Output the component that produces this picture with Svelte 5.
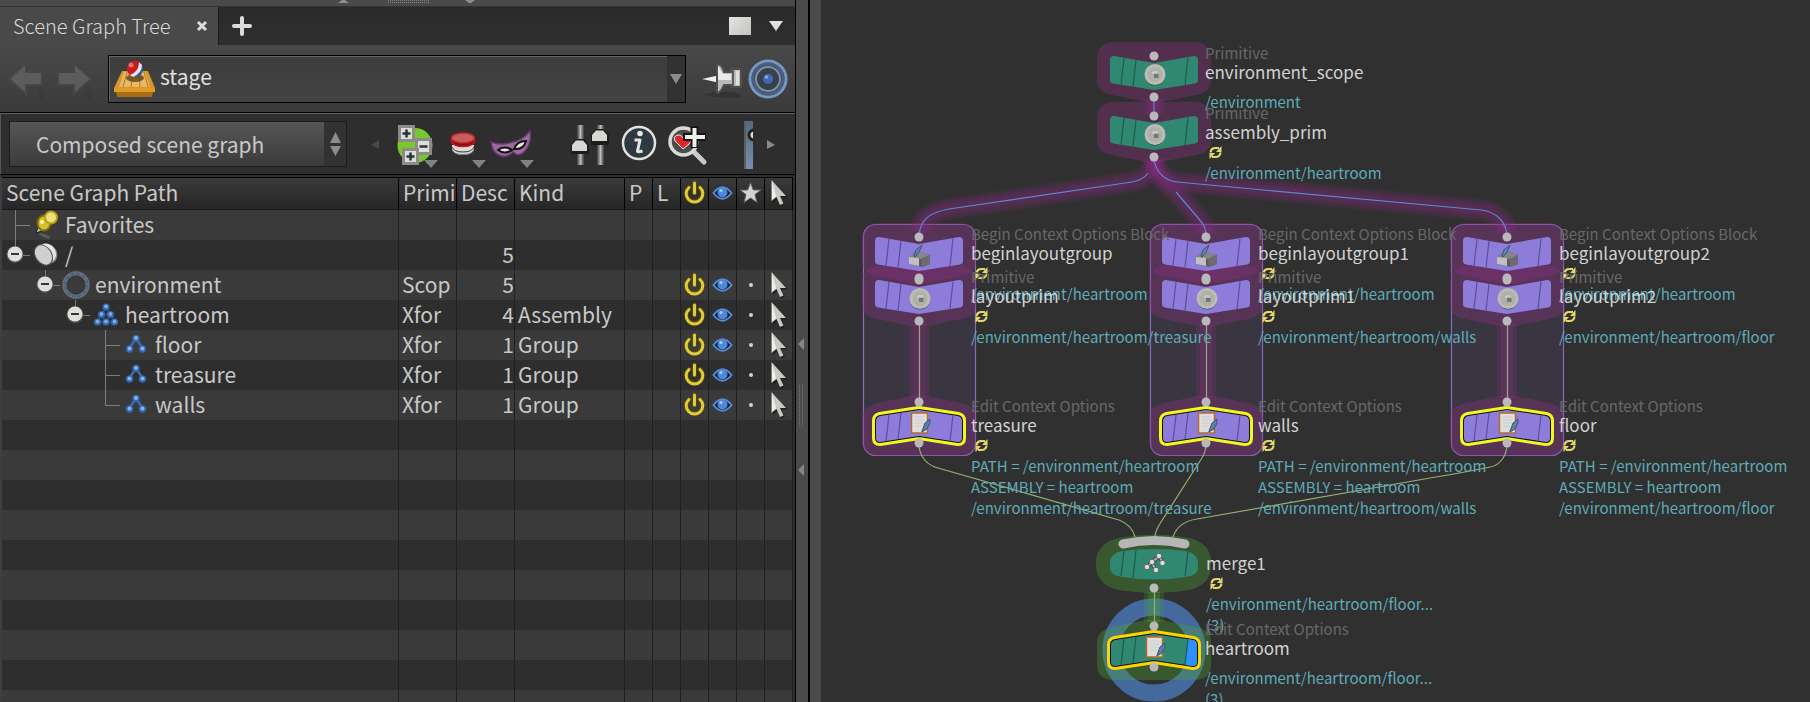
<script>
  const columns = ['Primi', 'Desc', 'Kind', 'P', 'L'];
  const rows = [
    { name: 'Favorites', depth: 0, icon: 'favorites', line: 'through' },
    { name: '/', depth: 0, icon: 'root', toggle: true, line: 'up', desc: 5 },
    { name: 'environment', depth: 1, icon: 'scope', toggle: true, line: 'up', type: 'Scop', desc: 5, flags: true },
    { name: 'heartroom', depth: 2, icon: 'assembly', toggle: true, line: 'up', type: 'Xfor', desc: 4, kind: 'Assembly', flags: true },
    { name: 'floor', depth: 3, icon: 'xform', line: 'through', type: 'Xfor', desc: 1, kind: 'Group', flags: true },
    { name: 'treasure', depth: 3, icon: 'xform', line: 'through', type: 'Xfor', desc: 1, kind: 'Group', flags: true },
    { name: 'walls', depth: 3, icon: 'xform', line: 'up', type: 'Xfor', desc: 1, kind: 'Group', flags: true }
  ];
  const blanks = Array.from({ length: 10 }, (_, i) => i);

  const blocks = [
    { x: 98, suffix: '', name: 'treasure' },
    { x: 385, suffix: '1', name: 'walls' },
    { x: 686, suffix: '2', name: 'floor' }
  ];
  const nodes = [
    { x: 333, y: 73, shape: 'down', tone: 'green', halo: 'purple', icon: 'disc' },
    { x: 333, y: 133, shape: 'down', tone: 'green', halo: 'purple', icon: 'disc' },
    ...blocks.flatMap((b) => [
      { x: b.x, y: 254, shape: 'down', tone: 'violet', halo: 'purple', icon: 'block' },
      { x: b.x, y: 297, shape: 'down', tone: 'violet', halo: 'purple', icon: 'disc' },
      { x: b.x, y: 426, shape: 'up', tone: 'violet', halo: 'purple', icon: 'clip', ring: '#f3f81c' }
    ]),
    { x: 333, y: 564, shape: 'merge', tone: 'green', halo: 'green', icon: 'merge' },
    { x: 333, y: 650, shape: 'up', tone: 'green', halo: 'green', icon: 'clip', ring: '#ffd500', display: true }
  ];
  const labels = [
    { x: 384, y: 44, type: 'Primitive', name: 'environment_scope', lines: ['/environment'] },
    { x: 384, y: 104, type: 'Primitive', name: 'assembly_prim', badge: true, lines: ['/environment/heartroom'] },
    ...blocks.flatMap((b) => [
      { x: b.x + 52, y: 225, type: 'Begin Context Options Block', name: 'beginlayoutgroup' + b.suffix, badge: true, lines: ['/environment/heartroom'] },
      { x: b.x + 52, y: 268, type: 'Primitive', name: 'layoutprim' + b.suffix, badge: true, lines: ['/environment/heartroom/' + b.name] },
      { x: b.x + 52, y: 397, type: 'Edit Context Options', name: b.name, badge: true, lines: ['PATH = /environment/heartroom', 'ASSEMBLY = heartroom', '/environment/heartroom/' + b.name] }
    ]),
    { x: 385, y: 535, type: '', name: 'merge1', badge: true, lines: ['/environment/heartroom/floor...', '(3)'] },
    { x: 384, y: 620, type: 'Edit Context Options', name: 'heartroom', lines: ['/environment/heartroom/floor...', '(3)'] }
  ];
  const glowWires = [
    'M333 160C331 173 323 180 311 182L128 209C106 213 100 221 98 232',
    'M333 160C336 176 344 184 355 192L378 219C384 226 385 230 385 234',
    'M333 160C335 172 344 181 356 182L660 210C676 212 685 222 686 234',
    'M333 99V114'
  ];
  const blueWires = [
    'M327 173C323 179 317 181 311 182L128 209C106 213 100 221 98 234',
    'M355 192L378 219C384 226 385 230 385 236',
    'M333 160C335 172 344 181 356 182L660 210C676 212 685 222 686 236',
    'M333 99V116'
  ];
  const greenWires = [
    'M98 447C100 458 106 465 117 468L298 520C306 523 312 529 314 537',
    'M385 447C384 452 382 457 379 461L340 522C336 528 334 532 334 537',
    'M686 447C684 459 677 467 664 468Q640 473 609 478L376 519C362 521 355 528 352 537'
  ];
  const haloDown = 'M-40-31H40Q57-31 57-14V8Q57 19 42 22L8 29H-8L-42 22Q-57 19-57 8V-14Q-57-31-40-31Z';
  const haloUp = 'M-40 30H40Q57 30 57 14V-8Q57-19 42-23L8-30H-8L-42-23Q-57-19-57-8V14Q-57 30-40 30Z';
  const bodyDown = 'M-40-17L0-10L40-17Q44-17 44-13V7Q44 10 41 10.500L0 17L-41 10.500Q-44 10-44 7V-13Q-44-17-40-17Z';
  const bodyUp = 'M-39-10L0-16L39-10Q43-9 43-5V12Q43 16 39 16L0 10L-39 16Q-43 16-43 12V-5Q-43-9-39-10Z';
  const bodyMerge = 'M-32-13Q0-17 32-13Q44-10 44-2V4Q44 11 32 13Q0 18-32 13Q-44 11-44 4V-2Q-44-10-32-13Z';
  const haloMerge = 'M-36-26Q0-33 36-26Q57-20 57-2V2Q57 20 36 26Q0 32-36 26Q-58 20-58 2V-2Q-58-20-36-26Z';
  const bodies = { down: bodyDown, up: bodyUp, merge: bodyMerge };
  const halos = { down: haloDown, up: haloUp, merge: haloMerge };
</script>

{#snippet powerIcon()}
  <svg class="flag" viewBox="0 0 28 30" aria-hidden="true">
    <g fill="none" stroke-linecap="round">
      <path d="M8 9.500A8 8 0 1 0 19 9.500M13.500 5V15" stroke="#5c5000" stroke-width="5" opacity=".7" />
      <path d="M8 9.500A8.300 8.300 0 1 0 19 9.500" stroke="#e0cb3c" stroke-width="3" />
      <path d="M13.500 5V15" stroke="#e0cb3c" stroke-width="3" />
    </g>
  </svg>
{/snippet}

{#snippet eyeIcon()}
  <svg class="flag" viewBox="0 0 28 30" aria-hidden="true">
    <path d="M4.500 15Q13.500 3.500 22.500 15Q13.500 26.500 4.500 15Z" fill="#101a26" stroke="#568cd4" stroke-width="2" />
    <circle cx="13.500" cy="14.500" r="5" fill="#4c89dc" />
    <circle cx="12" cy="12.500" r="1.600" fill="#a9ccf7" />
  </svg>
{/snippet}

{#snippet cursorIcon()}
  <svg class="flag" viewBox="0 0 28 30" aria-hidden="true">
    <path d="M8 3.500V25L12.500 21L16 28.500L20 27L16.500 19.500H23Z" fill="#181818" opacity=".7" />
    <path d="M6.500 2V23L11.500 19L15 27L18.500 25.500L15 18H21Z" fill="#c9c9c4" />
    <path d="M7 3V21.500L11 18Z" fill="#eee" />
  </svg>
{/snippet}

{#snippet treeIcon(kind)}
  <svg class="node-icon" viewBox="0 0 30 30" aria-hidden="true">
    {#if kind === 'favorites'}
      <path d="M11 23L20 26L19 29Q12 27 8 24Z" fill="#5a5a5a" />
      <path d="M6 23L9 15L14 20Z" fill="#c8c8c8" stroke="#1d1d1d" />
      <ellipse cx="14" cy="13" rx="6.500" ry="7.500" fill="#d3c02c" stroke="#7e6c08" stroke-width="2" />
      <circle cx="21" cy="7.500" r="6" fill="#eee27a" stroke="#b79f16" stroke-width="2" />
      <circle cx="12" cy="12" r="2" fill="#fff6b8" />
    {:else if kind === 'root'}
      <ellipse cx="18" cy="14" rx="9" ry="10" transform="rotate(-35 18 14)" fill="#8c8c8c" />
      <ellipse cx="17" cy="13" rx="8.500" ry="10" transform="rotate(-35 17 13)" fill="#e6e6e6" />
      <ellipse cx="13.500" cy="15" rx="8" ry="11" transform="rotate(-35 13.500 15)" fill="#cfcfcd" stroke="#555" />
    {:else if kind === 'scope'}
      <circle cx="16" cy="15" r="11.700" fill="none" stroke="#6e6e6e" stroke-width="4" />
      <circle cx="16" cy="15" r="11.500" fill="none" stroke="#2e62a8" stroke-width="1.600" stroke-dasharray="4 2" />
    {:else if kind === 'assembly'}
      <path d="M16 7L7 22M16 7L25 22M11 14H21M7 22H25M11 14L16 22L21 14" stroke="#26466f" stroke-width="2.500" fill="none" />
      {#each [[16, 7], [11.5, 14.5], [20.5, 14.5], [7.500, 22], [16, 22], [24.500, 22]] as p}
        <circle cx={p[0]} cy={p[1]} r="3.600" fill="#3468b2" />
        <circle cx={p[0]} cy={p[1] - 0.5} r="1.900" fill="#82a9dc" />
      {/each}
    {:else}
      <path d="M9 19L16 8L23 19" stroke="#356bb6" stroke-width="2.500" fill="none" />
      {#each [[16, 8.500], [9.500, 19], [22.500, 19]] as p}
        <circle cx={p[0]} cy={p[1]} r="3.700" fill="#3468b2" />
        <circle cx={p[0]} cy={p[1] - 0.5} r="1.900" fill="#8db4e6" />
      {/each}
    {/if}
  </svg>
{/snippet}

{#snippet dropMark()}
  <path d="M34 39H48L41 47Z" fill="#828282" />
{/snippet}

<svelte:head><title>Scene Graph Tree</title></svelte:head>

<main class="app">
  <section class="pane">
    <div class="strip">
      <svg viewBox="0 0 150 6" aria-hidden="true">
        <path d="M4 3H15L11 0H8Z M131 0H141L137 3H135Z" fill="#8d8d8d" />
        <path d="M54 .500H95M54 2.500H95" stroke="#7e7e7e" stroke-dasharray="1 1" />
      </svg>
    </div>

    <header class="tabs">
      <div class="tab">
        <span>Scene Graph Tree</span>
        <button aria-label="Close tab">
          <svg width="12" height="12" viewBox="0 0 12 12"><path d="M2 2L10 10M10 2L2 10" stroke="#dcdcda" stroke-width="3" /></svg>
        </button>
      </div>
      <button class="add" aria-label="New tab">
        <svg width="20" height="20" viewBox="0 0 20 20"><path d="M2 10H18M10 2V18" stroke="#dcdcda" stroke-width="4" stroke-linecap="round" /></svg>
      </button>
      <button class="max" aria-label="Maximize pane"><span></span></button>
      <button aria-label="Pane menu">
        <svg width="14" height="12" viewBox="0 0 14 12"><path d="M0 1H14L7 11Z" fill="#e0e0de" /></svg>
      </button>
    </header>

    <nav class="pathbar">
      <button aria-label="Back">
        <svg width="48" height="48" viewBox="0 0 48 48">
          <path d="M9 24L26 8V17H42V30H26V39Z" fill="#5c5c5c" stroke="#464646" stroke-width="2" />
          <path d="M39 34L46 40L39 46Z" fill="#3a3a3a" />
        </svg>
      </button>
      <button aria-label="Forward">
        <svg width="48" height="48" viewBox="0 0 48 48">
          <path d="M43 24L26 8V17H10V30H26V39Z" fill="#5c5c5c" stroke="#464646" stroke-width="2" />
          <path d="M39 34L46 40L39 46Z" fill="#3a3a3a" />
        </svg>
      </button>
      <div class="field">
        <svg width="44" height="38" viewBox="0 0 44 38" aria-hidden="true">
          <path d="M9 11H35L42 28H1Z" fill="#d9942c" />
          <path d="M11 12H32L37 27H6Z" fill="#e5b96a" />
          <path d="M14 12L10 27M20 12L18 27M26 12L27 27M31 12L35 27" stroke="#b97818" />
          <path d="M1 28H42V32H1Z" fill="#e09a28" />
          <path d="M3 32H40L39 37H4Z" fill="#a86d12" />
          <ellipse cx="22" cy="18" rx="9" ry="4" fill="#4a3210" opacity=".7" />
          <circle cx="22" cy="9" r="8" fill="#c61c24" />
          <path d="M29 5A8 8 0 0 1 22 17L19 16Q28 12 28 3Z" fill="#2e5da8" />
          <path d="M17 15Q26 12 26 2L29 5Q29 13 20 17Z" fill="#ece8e4" />
          <circle cx="18" cy="5" r="2.500" fill="#ee6a68" />
        </svg>
        <input aria-label="Path" value="stage" />
        <button aria-label="Path history">
          <svg width="12" height="12" viewBox="0 0 12 12"><path d="M0 1H12L6 11Z" fill="#8c8c8c" /></svg>
        </button>
      </div>
      <button class="pin" aria-label="Pin pane">
        <svg width="44" height="44" viewBox="0 0 44 44">
          <path d="M4 38Q20 32 40 37V40Q20 42 4 38Z" fill="#333" />
          <path d="M2 22L18 18.500V25.500Z" fill="#f2f2f0" />
          <path d="M17 7C21 7 23 11 24 15H31V12H41V30H31V28H24C22 32 21 36 17 36Z" fill="#b9b9b6" stroke="#4e4e4e" stroke-width="2" />
          <path d="M18 9C20 11 21 16 24 17H31V23H18Z" fill="#eaeae8" />
          <path d="M33 13V29" stroke="#5d5d5d" stroke-width="2" />
          <path d="M37.500 14V28" stroke="#dededc" stroke-width="3" />
        </svg>
      </button>
      <button aria-label="Link group">
        <svg width="42" height="42" viewBox="0 0 42 42">
          <circle cx="21" cy="21" r="18" fill="#3d4450" stroke="#7897c6" stroke-width="3" />
          <circle cx="21" cy="21" r="15" fill="none" stroke="#4d5d78" stroke-width="3" />
          <circle cx="21" cy="21" r="12" fill="#3c3f44" stroke="#7391bd" stroke-width="2" />
          <circle cx="21" cy="21" r="5" fill="#3a6cbc" />
          <circle cx="19.500" cy="19" r="1.700" fill="#86aee6" />
        </svg>
      </button>
    </nav>

    <div class="toolbar">
      <div class="combo">
        <select aria-label="Scene graph view"><option>Composed scene graph</option></select>
        <svg width="22" height="44" viewBox="0 0 22 44" aria-hidden="true"><path d="M6 21H17L11.500 10ZM6 24H17L11.500 34Z" fill="#8c8c8c" /></svg>
      </div>
      <button class="scroll left" aria-label="Scroll left"><svg width="8" height="10" viewBox="0 0 8 10"><path d="M8 0V9L0 5Z" fill="#484848" /></svg></button>
      <button aria-label="Expand and collapse">
        <svg width="48" height="48" viewBox="0 0 48 48">
          <circle cx="25" cy="24.500" r="17.500" fill="#78c82c" />
          {#each [[8, 4, true], [25, 17, false], [12, 27, true]] as s}
            <rect x={s[0]} y={s[1]} width="17" height="17" fill="#8b8b89" />
            <rect x={s[0] + 3} y={s[1] + 3} width="11" height="11" fill="#deded9" />
            <path d={s[2] ? `M${s[0] + 4.5} ${s[1] + 8.5}h8M${s[0] + 8.5} ${s[1] + 4.5}v8` : `M${s[0] + 4.5} ${s[1] + 8.5}h8`} stroke="#273338" stroke-width="2.500" />
          {/each}
          {@render dropMark()}
        </svg>
      </button>
      <button aria-label="Payloads">
        <svg width="48" height="48" viewBox="0 0 48 48">
          <path d="M14 24V28Q16 34 25 34T36 28V24Z" fill="#dadad6" />
          <path d="M14 26Q16 31 25 31T36 26" fill="none" stroke="#3a3a3a" />
          <path d="M14 29Q16 33.500 25 33.500T36 29" fill="none" stroke="#7c7c7a" />
          <path d="M13.500 17V20Q15 25.500 25 25.500T36.500 20V17Z" fill="#7e1015" stroke="#c01b22" stroke-width="1.500" />
          <ellipse cx="25" cy="17" rx="11.500" ry="5" fill="#c45f60" stroke="#cc1f27" stroke-width="1.500" />
          {@render dropMark()}
        </svg>
      </button>
      <button aria-label="Masks">
        <svg width="48" height="48" viewBox="0 0 48 48">
          <path d="M5 21Q16 25 26 21Q36 20 44 10Q46 22 39 30Q33 37 27 31Q20 38 13 34Q6 31 5 21Z" fill="#9a6a9c" stroke="#67376f" stroke-width="1.500" />
          <path d="M12 29Q18 24 26 29Q19 34 12 29ZM28 28Q31 20 40 20Q38 29 28 28Z" fill="#e9e6e8" stroke="#101010" stroke-width="2" />
          {@render dropMark()}
        </svg>
      </button>
      <button class="spaced" aria-label="Settings">
        <svg width="48" height="48" viewBox="0 0 48 48">
          <path d="M14.500 4V44M34.500 4V44" stroke="#6f6f6d" stroke-width="6" />
          <path d="M14.500 4V44M34.500 4V44" stroke="#bcbcba" stroke-width="2" />
          <path d="M5 33V24L10 18H19L23 24V33ZM25 24V14L30 8H37L43 14V24Z" fill="#1c1c1c" />
          <path d="M6 30V24L10 19.500H17L21 24V30ZM26 20V14L30 9.500H37L41 14V20Z" fill="#d6d6d2" />
        </svg>
      </button>
      <button aria-label="Scene graph details">
        <svg width="48" height="48" viewBox="0 0 48 48">
          <circle cx="25" cy="22" r="16" fill="#2f3a40" stroke="#e2e2df" stroke-width="2.500" />
          <circle cx="26" cy="12.500" r="2.800" fill="#e6e6e3" />
          <path d="M20.500 19H26L23.500 30Q23.500 31.500 28.500 30" fill="none" stroke="#e6e6e3" stroke-width="3" stroke-linejoin="round" />
        </svg>
      </button>
      <button aria-label="Find primitives">
        <svg width="48" height="48" viewBox="0 0 48 48">
          <path d="M30 29L42 41" stroke="#c9c9c5" stroke-width="5" stroke-linecap="round" />
          <circle cx="21.500" cy="20.500" r="13.500" fill="#484d4d" stroke="#d9d9d5" stroke-width="3.500" />
          <path d="M21 28L13 20Q11 15 16 14Q19 13 21 17Q24 13 27 15Q31 19 27 23Z" fill="#e02428" stroke="#f1eeee" />
          <path d="M21 16H44M32.500 5V27" stroke="#161616" stroke-width="8" />
          <path d="M23 16H43M32.500 7V26" stroke="#f0f0ee" stroke-width="4" />
        </svg>
      </button>
      <span class="cut"></span>
      <button class="scroll right" aria-label="Scroll right"><svg width="8" height="10" viewBox="0 0 8 10"><path d="M0 0V9L8 5Z" fill="#8a8a8a" /></svg></button>
    </div>

    <div class="tree-wrap">
      <table>
        <colgroup>
          <col /><col class="c-mid" /><col class="c-mid" /><col class="c-kind" />
          {#each Array(6) as _}<col class="c-flag" />{/each}
        </colgroup>
        <thead>
          <tr>
            <th class="path">Scene Graph Path</th>
            {#each columns as c}<th>{c}</th>{/each}
            <th class="icon" aria-label="Activate">{@render powerIcon()}</th>
            <th class="icon" aria-label="Visible">{@render eyeIcon()}</th>
            <th class="icon" aria-label="Solo">
              <svg class="flag" viewBox="0 0 28 30"><path d="M13.500 4.500L16.300 12H24L18 16.500L20 24.500L13.500 20L7 24.500L9 16.500L3 12H10.700Z" fill="#d2d4d2" stroke="#566064" stroke-width="1" /></svg>
            </th>
            <th class="icon" aria-label="Selectable">{@render cursorIcon()}</th>
          </tr>
        </thead>
        <tbody>
          {#each rows as r}
            <tr>
              <td class="path">
                <div class="tree" style:padding-left="{r.depth * 30}px">
                  <svg class="branch" viewBox="0 0 30 30" aria-hidden="true">
                    <path d={r.line === 'through' ? 'M15.500 0V30M15.500 15.500H31' : 'M15.500 0V15.500H31'} fill="none" stroke="#7d7d7d" />
                    {#if r.toggle}
                      <circle cx="15" cy="14.500" r="8.500" fill="#55554f" />
                      <circle cx="15" cy="14" r="7.500" fill="#dfdfdb" />
                      <path d="M11 14H19" stroke="#2c3a40" stroke-width="2" />
                    {/if}
                  </svg>
                  {@render treeIcon(r.icon)}
                  <span>{r.name}</span>
                </div>
              </td>
              <td>{r.type ?? ''}</td>
              <td class="num">{r.desc ?? ''}</td>
              <td>{r.kind ?? ''}</td>
              <td></td>
              <td></td>
              {#if r.flags}
                <td class="icon">{@render powerIcon()}</td>
                <td class="icon">{@render eyeIcon()}</td>
                <td class="icon solo"><span class="dot"></span></td>
                <td class="icon">{@render cursorIcon()}</td>
              {:else}
                <td></td><td></td><td></td><td></td>
              {/if}
            </tr>
          {/each}
          {#each blanks as b (b)}
            <tr>{#each Array(10) as _}<td></td>{/each}</tr>
          {/each}
        </tbody>
      </table>
    </div>
  </section>

  <div class="splitter" role="separator">
    <svg width="12" height="142" viewBox="0 0 12 142" aria-hidden="true">
      <path d="M9 0V12L3 6ZM9 126V138L3 132Z" fill="#858585" />
      <path d="M4.500 47V89M7.500 47V89" stroke="#7a7a7a" stroke-dasharray="1 1" />
    </svg>
  </div>

  <section class="network" aria-label="Network editor">
    <svg class="wires" aria-hidden="true">
      {#each blocks as b}
        <rect x={b.x - 55.5} y="224.500" width="112" height="231" rx="12" fill="#3a3641" stroke="#8769bd" stroke-width="1.200" />
      {/each}
      <circle cx="333" cy="650" r="43" fill="none" stroke="#44699d" stroke-width="17" />
      {#each glowWires as d}
        <g fill="none" stroke="#8e2e85">
          <path {d} stroke-width="22" opacity=".14" />
          <path {d} stroke-width="17" opacity=".14" />
          <path {d} stroke-width="10" opacity=".2" />
        </g>
      {/each}
      {#each blocks as b}
        <g stroke="#8e2e85">
          <path d="M{b.x} 324V398" stroke-width="20" opacity=".2" />
          <path d="M{b.x} 324V398" stroke-width="12" opacity=".25" />
        </g>
      {/each}
      <path d="M333 592V622" stroke="#4eaa30" stroke-width="20" opacity=".2" />
      <path d="M333 592V622" stroke="#4eaa30" stroke-width="12" opacity=".25" />
      {#each nodes as n}
        <path d={halos[n.shape]} transform="translate({n.x} {n.y})" class={'halo-' + n.halo} />
      {/each}
      <g fill="none" stroke="#5f87d2" stroke-width="1.200">
        {#each blueWires as d}<path {d} />{/each}
      </g>
      <g fill="none" stroke="#93b074" stroke-width="1.200">
        {#each greenWires as d}<path {d} />{/each}
        {#each blocks as b}<path d="M{b.x + 0.5} 320V402" />{/each}
        <path d="M333.500 588V626" />
      </g>
      {#each nodes as n}
        <g transform="translate({n.x} {n.y})">
          {#if n.ring}
            <path d={bodyUp} fill={n.ring} stroke={n.ring} stroke-width="8" stroke-linejoin="round" />
            <path d={bodyUp} stroke="#101010" stroke-width="2" />
          {/if}
          <path d={bodies[n.shape]} class={'body-' + n.tone} />
          {#if n.display}<path d="M34-11L39-10Q43-9 43-5V12Q43 16 39 16L31 15Z" fill="#2e8fff" />{/if}
          <path
            d={n.shape === 'down' ? 'M-30-15L-33 11.500M-18-13L-21 13.500M34-15.500L31 12' : n.shape === 'up' ? 'M-30-11L-33 15M-18-13L-21 13M34-11L31 15' : 'M-30-13L-33 12M-18-14L-21 14.500M34-13L31 12.500'}
            class={'cut-' + n.tone}
          />
          {#if n.shape === 'merge'}
            <path d="M-31-20Q0-27 31-20" fill="none" stroke="#b6b6b6" stroke-width="9" stroke-linecap="round" />
            <circle cy="24" r="4.500" fill="#b9b9b9" />
          {:else}
            <circle cy={n.shape === 'down' ? -17 : -24} r="4.500" fill="#b9b9b9" />
            <circle cy={n.shape === 'down' ? 24 : 17} r="4.500" fill="#b9b9b9" />
          {/if}
          {#if n.icon === 'disc'}
            <ellipse cx="1" cy="3" rx="10" ry="9.500" fill="#3e4843" />
            <circle cx="1" cy="1.500" r="10.500" fill="#bcbcb4" />
            <circle cx="1" cy="1.500" r="7.500" fill="#b0b0a8" />
            <rect x="0" y="1" width="4.500" height="4" fill="#6c7b72" />
            <path d="M-1 1V-1H4" fill="none" stroke="#dedfd8" />
          {:else if n.icon === 'block'}
            <path d="M-10 3L-2-3L11 1V10L3 13L-10 10Z" fill="#5c5c5e" />
            <path d="M-10 3L-2-3L11 1L2 5Z" fill="#85858a" />
            <path d="M-10 3L0 4V12L-10 10Z" fill="#c0c0c0" />
            <path d="M2 5L11 1V10L3 13Z" fill="#6c6c70" />
            <path d="M-5 2L-3-4L3-9L0-2L-4 3Z" fill="#5d88b8" stroke="#335477" />
          {:else if n.icon === 'clip'}
            <rect x="-7.500" y="-13" width="16" height="20" fill="#e0dedb" stroke="#b06c2f" stroke-width="1.500" />
            <path d="M-4-9H5M-4-6H5M-4-3H5M-4 0H3" stroke="#c9ccd0" />
            <path d="M3 5L6-3L11-7Q12-3 8 3L3 6Z" fill="#5b7fa6" stroke="#3a5675" />
          {:else}
            <path d="M-7 3L5-8L9-1M-2-1L2 6" stroke="#3c4a46" stroke-width="4" fill="none" />
            <path d="M-7 3L5-8L9-1M-2-1L2 6" stroke="#b5b5b3" stroke-width="2" fill="none" />
            {#each [[-7, 3], [-2, -2], [5, -8], [8.500, -1], [2, 6]] as p}
              <circle cx={p[0]} cy={p[1]} r="2.800" fill="#dcdcda" stroke="#5d6663" />
            {/each}
          {/if}
        </g>
      {/each}
    </svg>
    {#each labels as l}
      <div class="label" style:left="{l.x}px" style:top="{l.y}px">
        <p class="type">{l.type}</p>
        <p class="name">{l.name}</p>
        <div class="gap" class:badge={l.badge}>
          {#if l.badge}
            <svg width="13" height="13" viewBox="0 0 13 13" aria-hidden="true">
              <g fill="none" stroke="#e6d867" stroke-width="2.200">
                <path d="M1.500 6.500Q2 2 6.500 2H10" />
                <path d="M11.500 6.500Q11 11 6.500 11H3" />
              </g>
              <path d="M12.500 0V6H7ZM.500 13V7H6Z" fill="#e6d867" />
            </svg>
          {/if}
        </div>
        {#each l.lines as t}<p class="info">{t}</p>{/each}
      </div>
    {/each}
  </section>
</main>

<style>
  :global(body) {
    background: #303030;
  }
  .app {
    display: grid;
    grid-template-columns: minmax(0, 795fr) 26px minmax(0, 989fr);
    height: 100vh;
    overflow: hidden;
    color: #c8c8c8;
    font: 21px/30px 'Noto Sans CJK SC', 'Noto Sans', sans-serif;
  }
  button {
    display: flex;
    align-items: center;
    justify-content: center;
    padding: 0;
    border: 0;
    background: none;
    color: inherit;
  }
  svg {
    display: block;
    flex: none;
  }
  .pane {
    display: flex;
    flex-direction: column;
    min-height: 0;
    background: #2e2e2e;
  }
  .strip {
    height: 6px;
    flex: none;
    background: #4a4a4a;
    border-bottom: 1px solid #333;
    padding-left: 42%;
  }
  .strip svg {
    width: 150px;
    height: 6px;
  }
  .tabs {
    display: flex;
    align-items: center;
    height: 38px;
    flex: none;
    gap: 18px;
    padding-right: 12px;
    background: linear-gradient(#2a2a2a, #2f2f2f);
  }
  .tab {
    display: flex;
    align-items: center;
    justify-content: space-between;
    align-self: stretch;
    width: 195px;
    padding: 0 10px 0 13px;
    background: #494949;
    border-right: 1px solid #1c1c1c;
    font-size: 20px;
    font-weight: 300;
    color: #d8d8d8;
  }
  .add {
    margin: 0 auto 0 -5px;
  }
  .max span {
    width: 22px;
    height: 18px;
    background: linear-gradient(135deg, #e4e4e2, #c2c2be);
  }
  .pathbar {
    display: flex;
    align-items: center;
    height: 68px;
    flex: none;
    padding: 0 6px 0 0;
    background: linear-gradient(#494949, #3a3a3a);
    border-bottom: 1px solid #000;
    box-sizing: border-box;
  }
  .field {
    display: flex;
    align-items: center;
    flex: 1;
    min-width: 0;
    height: 46px;
    margin: 0 14px 0 12px;
    border: 1px solid #000;
    background: linear-gradient(#3c3c3c, #434343);
    box-shadow: inset 1px 1px #666;
  }
  .field > svg {
    margin: 0 3px 0 4px;
  }
  .field input {
    flex: 1;
    min-width: 0;
    height: 30px;
    padding: 0 0 6px;
    border: 0;
    background: none;
    color: #e0e0e0;
    font: inherit;
  }
  .field button {
    align-self: stretch;
    width: 18px;
    background: #323232;
  }
  .pin {
    margin-right: 3px;
  }
  .toolbar {
    display: flex;
    align-items: center;
    height: 62px;
    flex: none;
    box-sizing: border-box;
    padding: 2px 20px 0 8px;
    border-top: 1px solid #626262;
    border-bottom: 1px solid #000;
    border-left: 1px solid #555;
  }
  .combo {
    display: flex;
    flex: 1;
    min-width: 0;
    margin-bottom: 2px;
    border: 1px solid #1d1d1d;
    background: linear-gradient(#565656, #3b3b3b);
  }
  .combo select {
    flex: 1;
    min-width: 0;
    height: 44px;
    padding: 0 26px;
    border: 0;
    background: none;
    appearance: none;
    color: #c8c8c8;
    font: inherit;
  }
  .combo svg {
    background: #323232;
  }
  .scroll.left {
    margin: 0 11px 0 24px;
  }
  .spaced {
    margin-left: 32px;
  }
  .cut {
    width: 9px;
    height: 48px;
    margin: 0 14px 0 34px;
    background: radial-gradient(circle at 10px 14px, #ddd 3px, #222 4px 6px, transparent 7px), linear-gradient(#56687f, #7590b0);
    box-shadow: inset 2px 0 #5d5d5d;
  }
  .tree-wrap {
    flex: 1;
    min-height: 0;
    overflow: hidden;
    border-left: 2px solid #3f3f3f;
    padding-right: 2px;
    margin-top: 2px;
  }
  table {
    width: 100%;
    table-layout: fixed;
    border-collapse: separate;
    border-spacing: 0;
  }
  .c-mid {
    width: 58px;
  }
  .c-kind {
    width: 110px;
  }
  .c-flag {
    width: 28px;
  }
  th,
  td {
    box-sizing: border-box;
    height: 30px;
    padding: 0 0 0 3px;
    border-right: 1px solid #202020;
    text-align: left;
    vertical-align: top;
    font-weight: inherit;
    line-height: 28px;
    white-space: nowrap;
  }
  th {
    height: 33px;
    padding-left: 4px;
    border-right-color: #000;
    border-bottom: 1px solid #191919;
    border-top: 1px solid #000;
    background: linear-gradient(#3a3a3a, #262626);
    line-height: 29px;
  }
  td.path {
    padding: 0;
  }
  th.icon,
  td.icon {
    padding: 0;
  }
  tbody tr:nth-child(odd) {
    background: #3a3a3a;
  }
  .num {
    padding: 0;
    text-align: right;
  }
  .flag {
    width: 28px;
    height: 30px;
  }
  .solo {
    vertical-align: middle;
  }
  .dot {
    display: block;
    width: 4px;
    height: 4px;
    margin: auto;
    border-radius: 2px;
    background: #d0d0cc;
  }
  .tree {
    display: flex;
    margin-left: -2px;
  }
  .branch,
  .node-icon {
    width: 30px;
    height: 30px;
  }
  .tree span {
    padding-left: 5px;
  }
  .splitter {
    display: flex;
    align-items: center;
    background: linear-gradient(90deg, #000 1px, #4a4a4a 1px 13px, #000 13px 15px, #4b4b4b 15px);
    padding-top: 116px;
    box-sizing: border-box;
  }
  .network {
    position: relative;
    overflow: hidden;
    background: #303030;
  }
  .wires {
    width: 100%;
    height: 100%;
  }
  .halo-purple {
    fill: #8e2e85;
    fill-opacity: 0.35;
  }
  .halo-green {
    fill: #4eaa30;
    fill-opacity: 0.33;
  }
  .body-green {
    fill: #308872;
  }
  .body-violet {
    fill: #8e7cdb;
  }
  .cut-green {
    stroke: #1f5c4d;
    stroke-width: 1.2;
  }
  .cut-violet {
    stroke: #5c4f98;
    stroke-width: 1.2;
  }
  .label {
    position: absolute;
    white-space: nowrap;
  }
  .label p {
    margin: 0;
  }
  .type {
    height: 17px;
    font-size: 15px;
    line-height: 18px;
    color: #686868;
  }
  .name {
    font-size: 17px;
    line-height: 22px;
    color: #d2d2d2;
  }
  .gap {
    height: 8px;
  }
  .badge {
    display: flex;
    align-items: center;
    height: 19px;
    padding-left: 4px;
  }
  .info {
    font-size: 15px;
    line-height: 21px;
    color: #5fabb8;
  }
</style>
